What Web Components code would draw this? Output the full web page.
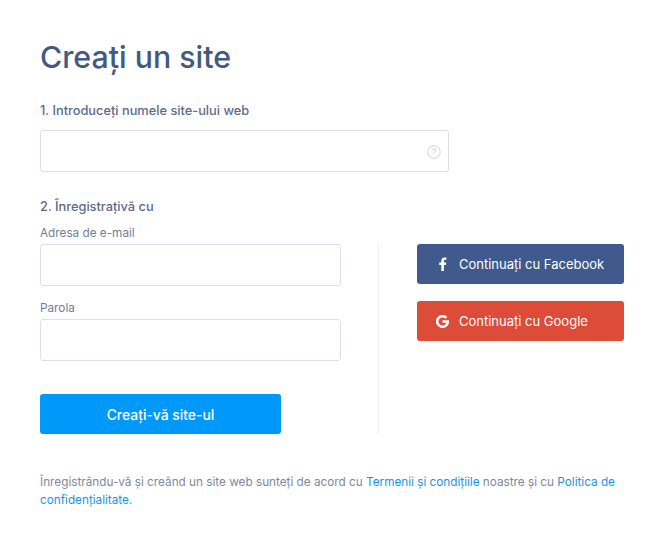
<!DOCTYPE html>
<html lang="ro">
<head>
<meta charset="utf-8">
<title>Creați un site</title>
<style>
  html, body { margin: 0; background: #fff; }
  body { font-family: Inter, "Liberation Sans", sans-serif; }
  signup-page a { color: #1a94e6; text-decoration: none; }
</style>
</head>
<body>
<signup-page>
  <span slot="title">Creați un site</span>
  <span slot="step1">1. Introduceți numele site-ului web</span>
  <span slot="step2">2. Înregistrațivă cu</span>
  <span slot="email-label">Adresa de e-mail</span>
  <span slot="password-label">Parola</span>
  <text-box slot="site" wide hint></text-box>
  <text-box slot="email"></text-box>
  <text-box slot="password"></text-box>
  <span slot="submit">Creați-vă site-ul</span>
  <social-button slot="social" kind="facebook">Continuați cu Facebook</social-button>
  <social-button slot="social" kind="google">Continuați cu Google</social-button>
  <div slot="legal">Înregistrându-vă și creând un site web sunteți de acord cu <a href="#">Termenii și condițiile</a> noastre și cu <a href="#">Politica de</a><br><a href="#">confidențialitate</a>.</div>
</signup-page>
<script>
const hintIcon = `<svg class="hint" width="14" height="14" viewBox="0 0 14 14" fill="none" stroke="#dcdde0" stroke-width="1.3">
  <circle cx="7" cy="7" r="6.2"/>
  <path d="M5.2 5.6c0-1 .8-1.600 1.800-1.600s1.800.6 1.800 1.500c0 1.300-1.800 1.300-1.800 2.700"/>
  <path d="M7 9.400v1.100"/>
</svg>`

customElements.define('text-box', class extends HTMLElement {
  connectedCallback() {
    const shadow = this.attachShadow({mode: 'open'})
    shadow.innerHTML = `
    <style>
      :host{ display: block; }
      .box{
        display: flex;
        align-items: center;
        justify-content: flex-end;
        box-sizing: border-box;
        height: 42px;
        width: 301px;
        padding: 2px 7px 0 0;
        border: 1px solid #dcdfea;
        border-radius: 3px;
        background: #fff;
      }
      :host([wide]) .box{ width: 409px; }
    </style>
    <div class="box">${this.hasAttribute('hint') ? hintIcon : ''}</div>`
  }
})

customElements.define('social-button', class extends HTMLElement {
  connectedCallback() {
    const shadow = this.attachShadow({mode: 'open'})
    const icons = {
      facebook: `<svg width="9" height="14" viewBox="0 0 9 14" fill="#fff"><path d="M5.900 14V7.900h2l.4-2.500H5.900V4c0-.8.3-1.200 1.200-1.200h1.300V.6C8.100.5 7.400.4 6.600.4 4.700.4 3.300 1.600 3.300 3.700v1.700H1.200v2.500h2.100V14z"/></svg>`,
      google: `<svg width="13" height="13" viewBox="0 0 14 14" fill="none" stroke="#fff" stroke-width="2.800"><path d="M11.200 3.100A5.700 5.700 0 1 0 12.700 7H7"/></svg>`
    }
    shadow.innerHTML = `
    <style>
      :host{
        display: flex;
        align-items: center;
        box-sizing: border-box;
        height: 40px;
        width: 207px;
        padding-left: 19px;
        border-radius: 3px;
        color: #fff;
        font-size: 13px;
        background: #405a8d;
      }
      :host([kind="google"]){ background: #dd4b39; }
      .icon{
        display: flex;
        justify-content: center;
        width: 13px;
        margin-right: 10px;
      }
    </style>
    <span class="icon">${icons[this.getAttribute('kind')]}</span>
    <slot></slot>`
  }
})

customElements.define('signup-page', class extends HTMLElement {
  connectedCallback() {
    const shadow = this.attachShadow({mode: 'open'})
    shadow.innerHTML = `
    <style>
      :host{
        display: block;
        box-sizing: border-box;
        width: 667px;
        height: 545px;
        padding: 37px 40px 0;
      }
      h1{
        margin: 0 0 25px;
        font-size: 30.3px;
        line-height: 40px;
        font-weight: 500;
        color: #43597f;
      }
      .step{
        font-size: 12.8px;
        line-height: 18px;
        font-weight: 450;
        color: #5c6b8c;
      }
      .first{ margin-bottom: 10px; }
      .second{ margin-top: 26px; }
      .field-label{
        font-size: 11.75px;
        line-height: 16px;
        color: #757d92;
      }
      .top-label{ margin: 9px 0 3px; }
      .password-label{ margin: 14px 0 3px; }
      .columns{ display: flex; }
      .fields{
        display: flex;
        flex-direction: column;
        box-sizing: border-box;
        width: 339px;
        height: 190px;
        border-right: 1px solid #eeeff2;
      }
      .submit{
        display: flex;
        align-items: center;
        justify-content: center;
        flex: none;
        box-sizing: border-box;
        width: 241px;
        height: 40px;
        margin-top: 33px;
        padding-top: 1px;
        border-radius: 3px;
        background: #0099fa;
        color: #fff;
        font-size: 13.9px;
        font-weight: 450;
      }
      .social{
        display: flex;
        flex-direction: column;
        gap: 17px;
        margin-left: 38px;
      }
      .legal{
        margin-top: 39px;
        font-size: 11.75px;
        line-height: 18px;
        color: #7f879b;
      }
    </style>
    <h1><slot name="title"></slot></h1>
    <div class="step first"><slot name="step1"></slot></div>
    <slot name="site"></slot>
    <div class="step second"><slot name="step2"></slot></div>
    <div class="field-label top-label"><slot name="email-label"></slot></div>
    <div class="columns">
      <div class="fields">
        <slot name="email"></slot>
        <div class="field-label password-label"><slot name="password-label"></slot></div>
        <slot name="password"></slot>
        <div class="submit"><slot name="submit"></slot></div>
      </div>
      <div class="social"><slot name="social"></slot></div>
    </div>
    <div class="legal"><slot name="legal"></slot></div>`
  }
})
</script>
</body>
</html>
